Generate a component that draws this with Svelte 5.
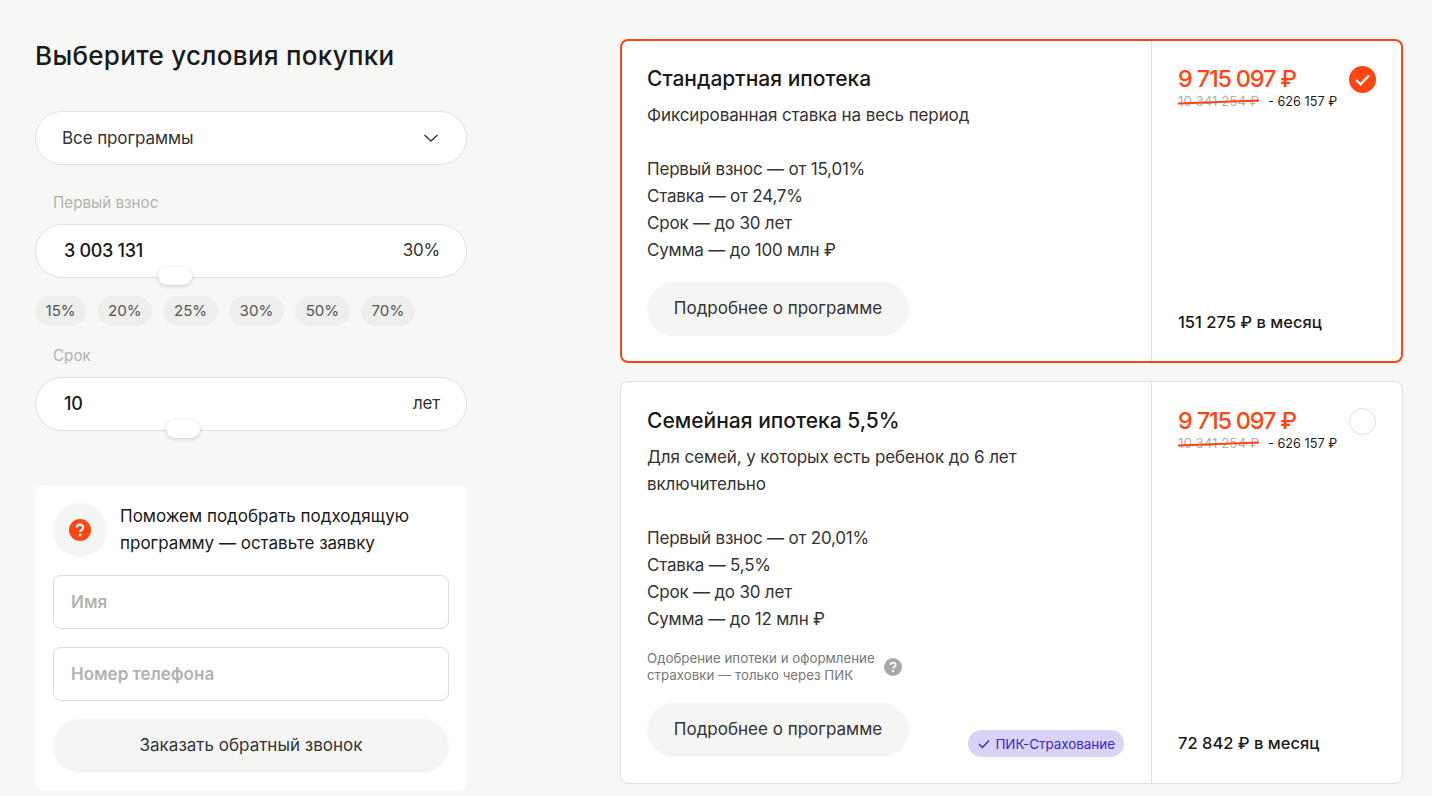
<script>
  const chips = ['15%', '20%', '25%', '30%', '50%', '70%'];
  const plans = [
    {
      title: 'Стандартная ипотека',
      sub: ['Фиксированная ставка на весь период'],
      list: ['Первый взнос — от 15,01%', 'Ставка — от 24,7%', 'Срок — до 30 лет', 'Сумма — до 100 млн ₽'],
      month: '151 275 ₽ в месяц',
      selected: true
    },
    {
      title: 'Семейная ипотека 5,5%',
      sub: ['Для семей, у которых есть ребенок до 6 лет', 'включительно'],
      list: ['Первый взнос — от 20,01%', 'Ставка — 5,5%', 'Срок — до 30 лет', 'Сумма — до 12 млн ₽'],
      month: '72 842 ₽ в месяц',
      selected: false,
      note: true
    }
  ];
</script>

<div class="page">
  <aside class="left">
    <h1>Выберите условия покупки</h1>

    <div class="field select">
      <span>Все программы</span>
      <svg width="16" height="16" viewBox="0 0 16 16" fill="none"><path d="M1.5 5 8 11l6.5-6" stroke="#222" stroke-width="1.2"/></svg>
    </div>

    <div class="label first">Первый взнос</div>
    <div class="field slider">
      <span class="val">3 003 131</span><span class="unit">30%</span>
      <i class="thumb t1"></i>
    </div>
    <div class="chips">
      {#each chips as c}<span class="chip">{c}</span>{/each}
    </div>

    <div class="label term">Срок</div>
    <div class="field slider">
      <span class="val">10</span><span class="unit">лет</span>
      <i class="thumb t2"></i>
    </div>

    <section class="help">
      <div class="help-head">
        <div class="qwrap">
          <svg width="22" height="22" viewBox="0 0 22 22"><circle cx="11" cy="11" r="11" fill="#ff4612"/><path d="M7.8 8.6c0-1.9 1.4-3 3.2-3s3.2 1.1 3.2 2.8c0 2.4-3 2.4-3 4.6" fill="none" stroke="#fff" stroke-width="2.2"/><circle cx="11.1" cy="16" r="1.4" fill="#fff"/></svg>
        </div>
        <p>Поможем подобрать подходящую<br />программу — оставьте заявку</p>
      </div>
      <div class="box">Имя</div>
      <div class="box">Номер телефона</div>
      <div class="call">Заказать обратный звонок</div>
    </section>
  </aside>

  <main class="right">
    {#each plans as p}
      <article class="card" class:selected={p.selected}>
        <div class="info">
          <h2>{p.title}</h2>
          <div class="sub">
            {#each p.sub as s}<div>{s}</div>{/each}
          </div>
          <div class="list">
            {#each p.list as l}<div>{l}</div>{/each}
          </div>
          {#if p.note}
            <div class="note">
              <span>Одобрение ипотеки и оформление<br />страховки — только через ПИК</span>
              <svg width="18" height="18" viewBox="0 0 18 18"><circle cx="9" cy="9" r="9" fill="#a8a8a8"/><path d="M6.4 7c0-1.5 1.1-2.4 2.6-2.4s2.6.9 2.6 2.2c0 2-2.4 2-2.4 3.7" fill="none" stroke="#fff" stroke-width="1.8"/><circle cx="9.1" cy="13.2" r="1.15" fill="#fff"/></svg>
            </div>
          {/if}
          <div class="foot">
            <div class="more">Подробнее о программе</div>
            {#if p.note}
              <div class="tag">
                <svg width="12" height="10" viewBox="0 0 12 10" fill="none"><path d="M1 5l3.4 3.4L11 1.6" stroke="#3c25c9" stroke-width="1.4"/></svg>
                <span>ПИК-Страхование</span>
              </div>
            {/if}
          </div>
        </div>
        <div class="price">
          <div class="top">
            <div>
              <div class="now">9 715 097 ₽</div>
              <div class="was"><span class="old">10 341 254 ₽</span><span>- 626 157 ₽</span></div>
            </div>
            {#if p.selected}
              <svg class="mark" width="27" height="27" viewBox="0 0 27 27"><circle cx="13.5" cy="13.5" r="13.5" fill="#ff4612"/><path d="M7 14l4.6 4.4L20 9.5" fill="none" stroke="#fff" stroke-width="2.4"/></svg>
            {:else}
              <span class="mark empty"></span>
            {/if}
          </div>
          <div class="month">{p.month}</div>
        </div>
      </article>
    {/each}
  </main>
</div>

<style>
  :global(body) {
    margin: 0;
    background: #f7f7f5;
  }
  .page {
    height: 796px;
    overflow: hidden;
    box-sizing: border-box;
    display: flex;
    gap: 153px;
    padding: 39px 29px 0 35px;
    font-family: Inter, "Noto Sans", sans-serif;
    color: #1a1a1a;
    font-size: 17px;
  }
  .left {
    width: 432px;
    flex: none;
  }
  h1 {
    margin: 0 0 39px;
    font-size: 26px;
    line-height: 33px;
    font-weight: 500;
    letter-spacing: 0.3px;
  }
  .field {
    box-sizing: border-box;
    height: 54px;
    background: #fff;
    border: 1px solid #e0e0de;
    border-radius: 27px;
    display: flex;
    align-items: center;
    justify-content: space-between;
    position: relative;
  }
  .select {
    padding: 0 27px 1px 26px;
    color: #333;
    letter-spacing: -0.1px;
  }
  .label {
    color: #b2b2b0;
    font-size: 15.2px;
    line-height: 20px;
    padding-left: 18px;
  }
  .label.first {
    margin: 28px 0 11px;
  }
  .label.term {
    margin: 20px 0 11px;
  }
  .slider {
    padding: 0 26px 2px 28px;
  }
  .val {
    font-size: 18px;
    font-weight: 500;
    letter-spacing: -0.3px;
  }
  .unit {
    color: #333;
    letter-spacing: -0.2px;
  }
  .thumb {
    position: absolute;
    top: 42px;
    width: 34px;
    height: 18px;
    border-radius: 9px;
    background: #fff;
    box-shadow: 0 1px 4px rgba(0, 0, 0, 0.18);
  }
  .t1 {
    left: 122px;
  }
  .t2 {
    left: 130px;
  }
  .chips {
    display: flex;
    gap: 11.4px;
    margin-top: 18px;
  }
  .chip {
    height: 30px;
    line-height: 30px;
    padding: 0 10.5px;
    border-radius: 15px;
    background: #eeeeec;
    color: #555;
    font-size: 15.1px;
  }
  .help {
    margin-top: 54px;
    box-sizing: border-box;
    height: 306px;
    padding: 18px;
    background: #fff;
    border-radius: 8px;
  }
  .help-head {
    display: flex;
    align-items: center;
    gap: 13px;
    margin-bottom: 18px;
  }
  .qwrap {
    width: 54px;
    height: 54px;
    border-radius: 50%;
    background: #f5f5f3;
    display: flex;
    align-items: center;
    justify-content: center;
    flex: none;
  }
  .help-head p {
    margin: 0;
    line-height: 27px;
  }
  .box {
    box-sizing: border-box;
    height: 54px;
    border: 1px solid #dcdcda;
    border-radius: 8px;
    padding: 0 17px;
    line-height: 52px;
    color: #b2b2b0;
    font-weight: 600;
    margin-bottom: 18px;
  }
  .call {
    height: 54px;
    line-height: 52px;
    text-align: center;
    border-radius: 27px;
    background: #f5f5f3;
    color: #333;
  }
  .right {
    width: 783px;
    flex: none;
    display: flex;
    flex-direction: column;
    gap: 18px;
    align-items: stretch;
  }
  .card {
    box-sizing: border-box;
    display: flex;
    background: #fff;
    border: 1px solid #dfdfdd;
    border-radius: 8px;
  }
  .card.selected {
    border: 2px solid #ff4612;
  }
  .card .info {
    flex: 1;
    padding: 25px 27px 26px 26px;
    min-width: 0;
  }
  .card.selected .info {
    padding: 24px 25px 25px 25px;
  }
  h2 {
    margin: 0;
    font-size: 21px;
    line-height: 27px;
    font-weight: 500;
  }
  .sub {
    margin-top: 10px;
    line-height: 27px;
    color: #333;
    letter-spacing: -0.1px;
  }
  .list {
    margin-top: 27px;
    line-height: 27px;
    color: #333;
    letter-spacing: -0.2px;
  }
  .note {
    margin-top: 17px;
    display: flex;
    align-items: center;
    gap: 9px;
    font-size: 13.3px;
    line-height: 17px;
    color: #777;
  }
  .foot {
    margin-top: 18px;
    display: flex;
    justify-content: space-between;
    align-items: flex-end;
  }
  .card:not(.selected) .foot {
    margin-top: 19px;
  }
  .more {
    width: 262px;
    height: 54px;
    line-height: 52px;
    text-align: center;
    border-radius: 27px;
    background: #f5f5f3;
    color: #333;
  }
  .tag {
    height: 27px;
    padding: 0 9px 0 10px;
    border-radius: 14px;
    background: #d9d3f6;
    color: #3c25c9;
    font-size: 13.4px;
    display: flex;
    align-items: center;
    gap: 5px;
  }
  .price {
    width: 251px;
    flex: none;
    box-sizing: border-box;
    border-left: 1px solid #dfdfdd;
    padding: 24px 26px 26px 26px;
    display: flex;
    flex-direction: column;
    justify-content: space-between;
  }
  .card.selected .price {
    width: 250px;
    padding: 24px 25px 25px 26px;
  }
  .top {
    display: flex;
    justify-content: space-between;
    align-items: flex-start;
  }
  .now {
    color: #ff4612;
    font-size: 23.5px;
    line-height: 28px;
    font-weight: 500;
    letter-spacing: -1.2px;
    white-space: nowrap;
  }
  .card:not(.selected) .now {
    line-height: 29px;
  }
  .was {
    font-size: 12.7px;
    line-height: 16px;
    white-space: nowrap;
  }
  .old {
    position: relative;
    display: inline-block;
    color: #b0b0ae;
    margin-right: 9px;
    font-size: 13.3px;
  }
  .old::after {
    content: "";
    position: absolute;
    left: 0;
    right: 0;
    top: 8px;
    height: 1.5px;
    background: #ff4612;
    transform: rotate(-2deg);
  }
  .mark {
    margin-top: 2px;
    flex: none;
  }
  .card.selected .mark {
    margin-top: 1px;
  }
  .empty {
    box-sizing: border-box;
    width: 27px;
    height: 27px;
    border-radius: 50%;
    border: 1px solid #dfdfdd;
  }
  .month {
    font-size: 16.5px;
    font-weight: 500;
    line-height: 27px;
  }
</style>
